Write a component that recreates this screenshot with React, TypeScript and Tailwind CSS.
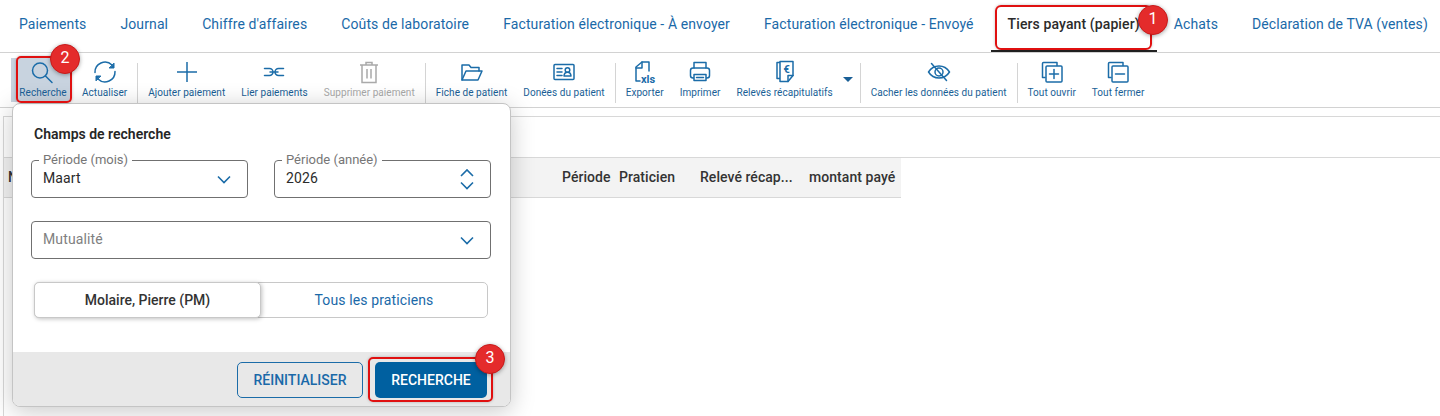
import React from 'react';

const tabs = [
  'Paiements',
  'Journal',
  "Chiffre d'affaires",
  'Coûts de laboratoire',
  'Facturation électronique - À envoyer',
  'Facturation électronique - Envoyé',
  'Tiers payant (papier)',
  'Achats',
  'Déclaration de TVA (ventes)',
];

const Icon = ({ children, w = 24 }: { children: React.ReactNode; w?: number }) => (
  <svg width={w} height="24" viewBox={`0 0 ${w} 24`} overflow="visible" fill="none" stroke="#1b6ca8" strokeWidth="1.5" strokeLinecap="round" strokeLinejoin="round">
    {children}
  </svg>
);

const SearchIcon = () => (
  <Icon>
    <circle cx="9" cy="10.5" r="7.5" />
    <path d="M14.5 16l6.5 6.5" />
  </Icon>
);
const RefreshIcon = () => (
  <Icon>
    <path d="M2 12.5A10 10 0 0 1 19 5" />
    <path d="M22 11.5A10 10 0 0 1 5 19" />
    <path d="M21 3.500v4.500h-4.500z" fill="#1b6ca8" strokeWidth="1" />
    <path d="M3 20.500v-4.500h4.500z" fill="#1b6ca8" strokeWidth="1" />
  </Icon>
);
const PlusIcon = () => (
  <Icon>
    <path d="M12 2v20M2 12h20" strokeLinecap="butt" />
  </Icon>
);
const LinkIcon = () => (
  <Icon>
    <path d="M2.500 8.500h5a3.500 3.500 0 0 1 0 7h-5M21.500 8.500h-5a3.500 3.500 0 0 0 0 7h5M8 12h8" />
  </Icon>
);
const TrashIcon = () => (
  <svg width="24" height="24" viewBox="0 0 24 24" fill="none" stroke="#a9a9a9" strokeWidth="1.5">
    <path d="M3 5h18M9 5V2.500h6V5M5 5v17.500h14V5M10 9v9.500M14 9v9.500" />
  </svg>
);
const FolderIcon = () => (
  <Icon>
    <path d="M2 20V5h7l2 2.500h8V11" />
    <path d="M2 20l4-9h16l-4 9z" />
  </Icon>
);
const CardIcon = () => (
  <Icon>
    <rect x="2" y="4.500" width="20" height="15" rx="1" />
    <path d="M5 8.500h5M5 12h5M5 15.500h5" />
    <circle cx="15.500" cy="10" r="2.300" />
    <path d="M12 16c.4-5 6.600-5 7 0z" />
  </Icon>
);
const XlsIcon = () => (
  <Icon>
    <path d="M7 21H3V7l6-5h7v9" />
    <path d="M3 8h6V2" />
    <text x="8" y="23" fontSize="11" fontWeight="700" fill="#1b6ca8" stroke="none" fontFamily="Roboto, sans-serif">xls</text>
  </Icon>
);
const PrintIcon = () => (
  <Icon>
    <path d="M6 8V2.500h12V8" />
    <rect x="2.500" y="8" width="19" height="10" rx="2.500" />
    <path d="M6 14.500h12v6H6zM8.500 17.500h7" strokeWidth="1.500" fill="white" />
  </Icon>
);
const ReportIcon = () => (
  <Icon>
    <path d="M7 2.500H4v16h4" />
    <path d="M7 1.500h13v14l-5 6H7z" fill="white" />
    <path d="M15 21.500v-6h5" />
    <text x="10.500" y="13" fontSize="11" fontWeight="700" fill="#1b6ca8" stroke="none" fontFamily="Roboto, sans-serif">€</text>
  </Icon>
);
const EyeOffIcon = () => (
  <Icon>
    <path d="M1.500 12C4 8 8 6 12 6s8 2 10.500 6C20 16 16 18 12 18s-8-2-10.500-6z" />
    <circle cx="12" cy="12" r="4" />
    <path d="M4.500 3.500l15 17" />
  </Icon>
);
const ExpandIcon = ({ minus }: { minus?: boolean }) => (
  <Icon>
    <path d="M5 17.500H2.500V3.500a1 1 0 0 1 1-1H17v3" />
    <rect x="6" y="6" width="16" height="16" rx="1" />
    {!minus && <path d="M14 9.500v9" />}
    <path d="M9.500 14h9" />
  </Icon>
);

const ToolItem = ({ label, children, disabled, active }: { label: string; children: React.ReactNode; disabled?: boolean; active?: boolean }) => (
  <div className={`flex h-[44px] flex-col items-center ${active ? 'w-[60px] bg-[#c8d3df] pl-2 pr-1' : 'px-2'}`}>
    <div className="flex h-[27px] items-center justify-center">{children}</div>
    <span className={`mt-[1px] whitespace-nowrap text-[10px] leading-[14px] tracking-[0.05px] ${disabled ? 'text-[#a8a8a8]' : 'text-[#1a5f96]'}`}>{label}</span>
  </div>
);

const Divider = () => <div className="mx-[2px] h-[40px] w-px self-center bg-[#d4d4d4]" />;

const Chevron = ({ up }: { up?: boolean }) => (
  <svg width="16" height="9" viewBox="0 0 16 9" fill="none" stroke="#1b6ca8" strokeWidth="1.600">
    <path d={up ? 'M2 8l6-6 6 6' : 'M2 1.500l6 6 6-6'} />
  </svg>
);

const Field = ({ label, value, stepper }: { label: string; value: string; stepper?: boolean }) => (
  <div className="relative flex h-[38px] w-[217px] items-center rounded-[4px] border border-[#707070] pl-[11px] pr-[15px]">
    <span className="absolute -top-[10px] left-[7px] bg-white px-1 text-[13px] leading-[18px] text-[#767676]">{label}</span>
    <span className="flex-1 pb-[1px] text-[14px] tracking-[0.12px] text-[#2b2b2b]">{value}</span>
    {stepper ? (
      <div className="flex flex-col gap-[4px]">
        <Chevron up />
        <Chevron />
      </div>
    ) : (
      <Chevron />
    )}
  </div>
);

const Badge = ({ n, className }: { n: number; className: string }) => (
  <div className={`absolute flex h-[30px] w-[30px] items-center justify-center rounded-full border border-[#c91a1a] bg-[#e42b2b] pb-[3px] text-[16px] text-white shadow-[0_1px_4px_rgba(0,0,0,0.35)] ${className}`}>
    {n}
  </div>
);

export default function App() {
  return (
    <div className="relative h-[416px] w-[1440px] overflow-hidden bg-white font-['Roboto',sans-serif]">
      {/* onglets */}
      <div className="flex h-[53px] items-stretch border-b border-[#d2d2d2] pl-[2px]">
        {tabs.map((t, i) => (
          <div
            key={t}
            className={`flex items-center whitespace-nowrap px-[17px] text-[14px] tracking-[0.11px] ${i === 6 ? 'border-b-2 border-[#222] pb-[1px] font-medium text-[#2b2b2b]' : 'pb-[3px] text-[#1a69a8]'}`}
          >
            {t}
          </div>
        ))}
      </div>

      {/* barre d'outils */}
      <div className="flex h-[55px] items-start border-b border-[#d2d2d2] pl-[11px] pt-[5px]">
        <ToolItem label="Recherche" active><SearchIcon /></ToolItem>
        <div className="w-[3px]" />
        <ToolItem label="Actualiser"><RefreshIcon /></ToolItem>
        <Divider />
        <ToolItem label="Ajouter paiement"><PlusIcon /></ToolItem>
        <ToolItem label="Lier paiements"><LinkIcon /></ToolItem>
        <ToolItem label="Supprimer paiement" disabled><TrashIcon /></ToolItem>
        <Divider />
        <ToolItem label="Fiche de patient"><FolderIcon /></ToolItem>
        <ToolItem label="Donées du patient"><CardIcon /></ToolItem>
        <Divider />
        <ToolItem label="Exporter"><XlsIcon /></ToolItem>
        <ToolItem label="Imprimer"><PrintIcon /></ToolItem>
        <ToolItem label="Relevés récapitulatifs"><ReportIcon /></ToolItem>
        <div className="ml-[2px] mr-[5px] mt-[19px] h-0 w-0 border-x-[5.500px] border-t-[5px] border-x-transparent border-t-[#1a5f96]" />
        <Divider />
        <ToolItem label="Cacher les données du patient"><EyeOffIcon /></ToolItem>
        <Divider />
        <ToolItem label="Tout ouvrir"><ExpandIcon /></ToolItem>
        <ToolItem label="Tout fermer"><ExpandIcon minus /></ToolItem>
      </div>

      {/* grille */}
      <div className="ml-[3px] mt-[8px] h-[300px] border-l border-t border-[#d8d8d8]">
        <div className="h-[41px] border-b border-[#d8d8d8]" />
        <div className="flex h-[39px] w-[897px] items-center bg-[#f3f3f3] text-[14px] font-medium tracking-[0.05px] text-[#333]">
          <span className="w-[558px] pl-[4px]">N</span>
          <span className="w-[57px]">Période</span>
          <span className="w-[81px]">Praticien</span>
          <span className="w-[109px]">Relevé récap...</span>
          <span>montant payé</span>
        </div>
        <div className="w-[897px] border-t border-[#d8d8d8]" />
      </div>

      {/* panneau de recherche */}
      <div className="absolute left-[12px] top-[103px] flex h-[304px] w-[499px] flex-col overflow-hidden rounded-[8px] border border-[#c4c4c4] bg-white shadow-[0_4px_24px_rgba(0,0,0,0.22)]">
        <div className="flex-1 px-[18px]">
          <div className="pl-[3px] pt-[20px] text-[14px] font-semibold leading-[20px] text-[#262626]">Champs de recherche</div>
          <div className="mt-[16px] flex w-[460px] justify-between">
            <Field label="Période (mois)" value="Maart" />
            <Field label="Période (année)" value="2026" stepper />
          </div>
          <div className="mt-[23px] flex h-[38px] w-[460px] items-center rounded-[4px] border border-[#707070] pl-[11px] pr-[15px]">
            <span className="flex-1 pb-[1px] text-[14px] tracking-[0.12px] text-[#808080]">Mutualité</span>
            <Chevron />
          </div>
          <div className="ml-[3px] mt-[23px] flex h-[36px] w-[454px] rounded-[5px] border border-[#c8c8c8] text-[14px]">
            <div className="-my-px -ml-px flex h-[36px] w-[227px] items-center justify-center rounded-[5px] border border-[#c8c8c8] bg-white font-medium text-[#333] shadow-[1px_1px_4px_rgba(0,0,0,0.25)]">
              Molaire, Pierre (PM)
            </div>
            <div className="flex flex-1 items-center justify-center tracking-[0.12px] text-[#1a69a8]">Tous les praticiens</div>
          </div>
        </div>
        <div className="flex h-[54px] items-start justify-end gap-[12px] bg-[#e8e8e8] pr-[23px] pt-[10px] text-[14px] font-medium">
          <button className="h-[36px] w-[126px] rounded-[5px] border border-[#1b6ca8] text-[#1a69a8]">RÉINITIALISER</button>
          <button className="h-[36px] w-[112px] rounded-[5px] bg-[#0060a0] text-white">RECHERCHE</button>
        </div>
      </div>

      {/* annotations */}
      <div className="absolute left-[995px] top-[5px] h-[45px] w-[157px] rounded-[6px] border-2 border-[#e01010] shadow-[0_0_3px_rgba(0,0,0,0.25)]" />
      <div className="absolute left-[16px] top-[56px] h-[47px] w-[56px] rounded-[5px] border-2 border-[#e01010] shadow-[0_0_3px_rgba(0,0,0,0.25)]" />
      <div className="absolute left-[368px] top-[357px] h-[45px] w-[125px] rounded-[5px] border-2 border-[#e01010] shadow-[0_0_3px_rgba(0,0,0,0.25)]" />
      <Badge n={1} className="left-[1138px] top-[5px]" />
      <Badge n={2} className="left-[50px] top-[44px]" />
      <Badge n={3} className="left-[475px] top-[344px]" />
    </div>
  );
}
